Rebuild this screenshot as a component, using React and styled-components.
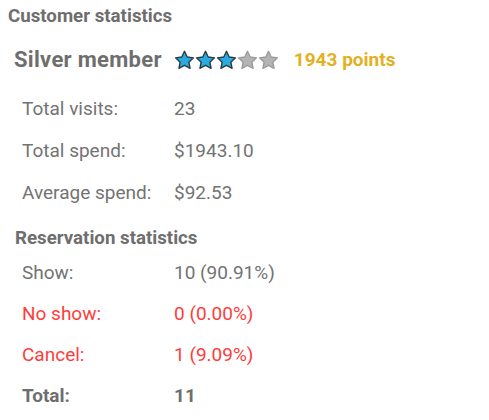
import React from "react";
import styled, { createGlobalStyle } from "styled-components";

const GlobalStyle = createGlobalStyle`
  body {
    margin: 0;
    background: #ffffff;
    font-family: Roboto, "Liberation Sans", sans-serif;
  }
`;

const Page = styled.div`
  width: 489px;
  height: 420px;
  padding: 4px 8px 0 8px;
  box-sizing: border-box;
  color: #737373;
`;

const Title = styled.h1`
  margin: 0;
  font-size: 18.7px;
  font-weight: 700;
  line-height: 24px;
  color: #6e6e6e;
`;

const MemberRow = styled.div`
  display: flex;
  align-items: center;
  margin-top: 17px;
  padding-left: 6px;
  height: 30px;
`;

const Level = styled.span`
  font-size: 22px;
  line-height: 30px;
  font-weight: 700;
  letter-spacing: 0.3px;
  color: #6e6e6e;
  margin-right: 12px;
`;

const Stars = styled.div`
  display: flex;
  margin-right: 15px;
`;

const Points = styled.span`
  font-size: 19px;
  line-height: 30px;
  font-weight: 700;
  color: #e2b021;
`;

const Table = styled.div`
  display: grid;
  grid-template-columns: 152px auto;
  grid-auto-rows: ${(p) => p.$row}px;
  align-items: center;
  margin-top: ${(p) => p.$top}px;
  padding-left: 14px;
`;

const Cell = styled.span`
  font-size: 19px;
  line-height: ${(p) => (p.$row ? p.$row : 42)}px;
  font-weight: ${(p) => (p.$bold ? 700 : 400)};
  color: ${(p) => (p.$red ? "#ff3c3c" : p.$bold ? "#6e6e6e" : "#737373")};
`;

const Subtitle = styled.h2`
  margin: 12px 0 0 0;
  padding-left: 7px;
  font-size: 18.7px;
  font-weight: 700;
  line-height: 24px;
  color: #6e6e6e;
`;

function Star({ on }) {
  return (
    <svg width="21" height="20" viewBox="0 0 24 23">
      <path
        d="M12 1.5l3.1 6.6 7.2.9-5.3 5 1.4 7.1L12 17.6l-6.4 3.5 1.4-7.1-5.3-5 7.2-.9z"
        fill={on ? "#29abe0" : "#b4b4b4"}
        stroke={on ? "#2b3a40" : "#9c9c9c"}
        strokeWidth="1.6"
        strokeLinejoin="round"
      />
    </svg>
  );
}

const customer = [
  ["Total visits:", "23"],
  ["Total spend:", "$1943.10"],
  ["Average spend:", "$92.53"],
];

const reservations = [
  { label: "Show:", value: "10 (90.91%)" },
  { label: "No show:", value: "0 (0.00%)", red: true },
  { label: "Cancel:", value: "1 (9.09%)", red: true },
  { label: "Total:", value: "11", bold: true },
];

export default function App() {
  return (
    <Page>
      <GlobalStyle />
      <Title>Customer statistics</Title>
      <MemberRow>
        <Level>Silver member</Level>
        <Stars>
          {[0, 1, 2, 3, 4].map((i) => (
            <Star key={i} on={i < 3} />
          ))}
        </Stars>
        <Points>1943 points</Points>
      </MemberRow>
      <Table $row={42} $top={13}>
        {customer.map(([l, v]) => (
          <React.Fragment key={l}>
            <Cell $row={42}>{l}</Cell>
            <Cell $row={42}>{v}</Cell>
          </React.Fragment>
        ))}
      </Table>
      <Subtitle>Reservation statistics</Subtitle>
      <Table $row={41} $top={2}>
        {reservations.map((r) => (
          <React.Fragment key={r.label}>
            <Cell $row={41} $red={r.red} $bold={r.bold}>{r.label}</Cell>
            <Cell $row={41} $red={r.red} $bold={r.bold}>{r.value}</Cell>
          </React.Fragment>
        ))}
      </Table>
    </Page>
  );
}
